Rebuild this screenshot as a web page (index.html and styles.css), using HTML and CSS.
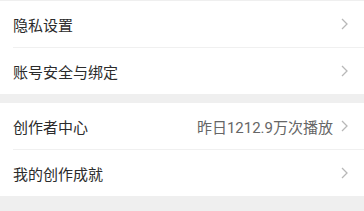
FILE: index.html
```html
<!DOCTYPE html>
<html lang="zh">
<head>
<meta charset="utf-8">
<link rel="stylesheet" href="styles.css">
</head>
<body>
<div class="page">
  <div class="group">
    <div class="row"><span class="label">隐私设置</span><span class="right"><svg class="chev" viewBox="0 0 7 12"><polyline points="1,1 6,6 1,11"/></svg></span></div>
    <div class="row"><span class="label">账号安全与绑定</span><span class="right"><svg class="chev" viewBox="0 0 7 12"><polyline points="1,1 6,6 1,11"/></svg></span></div>
  </div>
  <div class="group">
    <div class="row"><span class="label">创作者中心</span><span class="right"><span class="value">昨日1212.9万次播放</span><svg class="chev" viewBox="0 0 7 12"><polyline points="1,1 6,6 1,11"/></svg></span></div>
    <div class="row"><span class="label">我的创作成就</span><span class="right"><svg class="chev" viewBox="0 0 7 12"><polyline points="1,1 6,6 1,11"/></svg></span></div>
  </div>
</div>
</body>
</html>
```

FILE: styles.css
```css
html, body {
  margin: 0;
  padding: 0;
  background: #efefef;
  font-family: "Noto Sans CJK SC", "Noto Sans", sans-serif;
}
.page {
  display: flex;
  flex-direction: column;
  gap: 9px;
  padding-top: 1px;
}
.group {
  background: #fff;
  padding-left: 13px;
}
.row {
  height: 46px;
  display: flex;
  align-items: center;
  justify-content: space-between;
  padding-right: 16px;
}
.row + .row {
  border-top: 1px solid #f0f0f0;
}
.label {
  font-size: 15px;
  color: #2b2b2b;
}
.right {
  display: flex;
  align-items: center;
}
.value {
  font-family: "Roboto", "Noto Sans CJK SC", sans-serif;
  font-size: 15px;
  color: #666;
  margin-right: 8px;
}
.chev {
  width: 7px;
  height: 12px;
  fill: none;
  stroke: #b8b8b8;
  stroke-width: 1.3;
}
```
